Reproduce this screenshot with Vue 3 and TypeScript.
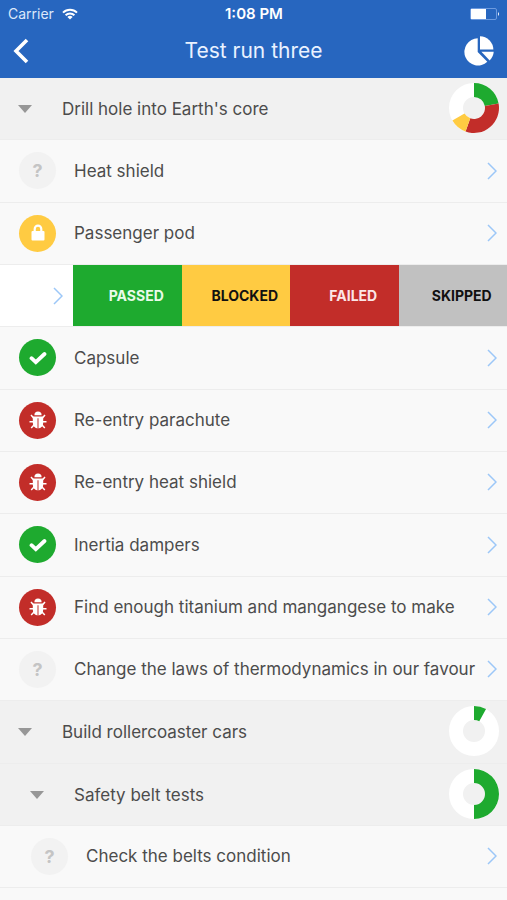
<script setup lang="ts">
type Status = 'none' | 'passed' | 'blocked' | 'failed'

interface Slice {
  color: string
  from: number
  to: number
}

interface Row {
  kind: 'section' | 'test' | 'swipe'
  label: string
  level: number
  status?: Status
  slices?: Slice[]
}

const green = '#1eaa2f'
const red = '#c22d29'
const yellow = '#ffcb42'

const rows: Row[] = [
  {
    kind: 'section',
    label: "Drill hole into Earth's core",
    level: 0,
    slices: [
      { color: green, from: 0, to: 0.222 },
      { color: red, from: 0.222, to: 0.555 },
      { color: yellow, from: 0.555, to: 0.666 },
    ],
  },
  { kind: 'test', label: 'Heat shield', level: 0, status: 'none' },
  { kind: 'test', label: 'Passenger pod', level: 0, status: 'blocked' },
  { kind: 'swipe', label: 'Set result', level: 0 },
  { kind: 'test', label: 'Capsule', level: 0, status: 'passed' },
  { kind: 'test', label: 'Re-entry parachute', level: 0, status: 'failed' },
  { kind: 'test', label: 'Re-entry heat shield', level: 0, status: 'failed' },
  { kind: 'test', label: 'Inertia dampers', level: 0, status: 'passed' },
  { kind: 'test', label: 'Find enough titanium and mangangese to make', level: 0, status: 'failed' },
  { kind: 'test', label: 'Change the laws of thermodynamics in our favour', level: 0, status: 'none' },
  {
    kind: 'section',
    label: 'Build rollercoaster cars',
    level: 0,
    slices: [{ color: green, from: 0, to: 0.08 }],
  },
  {
    kind: 'section',
    label: 'Safety belt tests',
    level: 1,
    slices: [{ color: green, from: 0, to: 0.5 }],
  },
  { kind: 'test', label: 'Check the belts condition', level: 1, status: 'none' },
]

const actions = ['Passed', 'Blocked', 'Failed', 'Skipped']

function point(fraction: number, radius: number): string {
  const angle = fraction * Math.PI * 2
  return `${(25 + radius * Math.sin(angle)).toFixed(2)} ${(25 - radius * Math.cos(angle)).toFixed(2)}`
}

function arc({ from, to }: Slice): string {
  const large = to - from > 0.5 ? 1 : 0
  return `M${point(from, 25)}A25 25 0 ${large} 1 ${point(to, 25)}L${point(to, 11)}A11 11 0 ${large} 0 ${point(from, 11)}Z`
}
</script>

<template>
  <div class="screen">
    <header class="top">
      <div class="status">
        <span class="carrier">
          Carrier
          <svg width="16" height="12" viewBox="0 0 16 12" fill="none" stroke="#fff" stroke-width="2" aria-hidden="true">
            <path d="M1 4.6a10 10 0 0 1 14 0M3.6 7.3a6.3 6.3 0 0 1 8.8 0" />
            <path d="M8 11.6 5.4 9a3.7 3.7 0 0 1 5.2 0z" fill="#fff" stroke="none" />
          </svg>
        </span>
        <time class="clock">1:08 PM</time>
        <svg class="battery" width="30" height="12" viewBox="0 0 30 12" aria-hidden="true">
          <rect x=".5" y=".5" width="26" height="11" rx="1.5" fill="none" stroke="#6d9ade" />
          <path d="M1 1h15v10H1z" fill="#fff" />
          <path d="M28 4q2 2 0 4z" fill="#fff" />
        </svg>
      </div>
      <div class="nav">
        <button class="nav-button" type="button" aria-label="Back">
          <svg width="16" height="26" viewBox="0 0 16 26" fill="none" stroke="#fff" stroke-width="3.6">
            <path d="M14 2 3 13l11 11" />
          </svg>
        </button>
        <h1>Test run three</h1>
        <button class="nav-button chart" type="button" aria-label="Statistics">
          <svg width="30" height="30" viewBox="0 0 30 30" fill="#fff">
            <path d="M13.7 2.3V16l9.6 9.8A13.6 13.6 0 1 1 13.7 2.3z" />
            <path d="M16 0.2A13.8 13.8 0 0 1 29.4 13.6H16z" />
            <path d="M17.4 15.8h12.3a13 13 0 0 1-4 8.6z" />
          </svg>
        </button>
      </div>
    </header>

    <ul class="list">
      <li v-for="row in rows" :key="row.label" :class="['row', row.kind, { nested: row.level > 0 }]">
        <template v-if="row.kind === 'section'">
          <button class="toggle" type="button" :aria-label="row.label" aria-expanded="true">
            <svg width="14" height="8" viewBox="0 0 14 8" fill="#979797"><path d="M0 0h14L7 8z" /></svg>
          </button>
          <h2 class="label">{{ row.label }}</h2>
          <svg class="donut" width="50" height="50" viewBox="0 0 50 50" aria-hidden="true">
            <circle cx="25" cy="25" r="18" fill="none" stroke="#fff" stroke-width="14" />
            <path v-for="slice in row.slices" :key="slice.from" :d="arc(slice)" :fill="slice.color" />
          </svg>
        </template>

        <template v-else-if="row.kind === 'swipe'">
          <a class="peek" href="#" :aria-label="row.label">
            <svg class="chevron" width="10" height="18" viewBox="0 0 10 18"><path d="m1 1 8 8-8 8" /></svg>
          </a>
          <button v-for="action in actions" :key="action" type="button" :class="['action', action.toLowerCase()]">
            {{ action }}
          </button>
        </template>

        <a v-else class="link" href="#">
          <span :class="['badge', row.status]">
            <template v-if="row.status === 'none'">?</template>
            <svg v-else-if="row.status === 'blocked'" width="14" height="19" viewBox="0 0 14 19">
              <path d="M3.7 8V4.9a3.3 3.3 0 0 1 6.6 0V8" fill="none" stroke="#fff" stroke-width="2.2" />
              <rect x=".5" y="7" width="13" height="9.4" rx="1" fill="#fff" />
            </svg>
            <svg v-else-if="row.status === 'passed'" width="18" height="14" viewBox="0 0 18 14">
              <path d="m2.500 7.200 4.300 4L15.500 3" fill="none" stroke="#fff" stroke-width="3.800" stroke-linecap="round" />
            </svg>
            <svg v-else width="18" height="19" viewBox="0 0 18 19">
              <path d="M5.400 4.200a3.600 3.600 0 0 1 7.200 0z" fill="#fff" />
              <path d="M3.800 5.400h10.400v6.200q0 5.200-4.700 5.900V7.200h-1v10.300q-4.700-.7-4.700-5.900z" fill="#fff" />
              <path d="M4.600 7 2 4M13.400 7 16 4M4.500 10.800H.5M13.500 10.800h4M5 14l-2.800 3M13 14l2.800 3" fill="none" stroke="#fff" stroke-width="1.500" />
            </svg>
          </span>
          <span class="label">{{ row.label }}</span>
          <svg class="chevron" width="10" height="18" viewBox="0 0 10 18" aria-hidden="true"><path d="m1 1 8 8-8 8" /></svg>
        </a>
      </li>
    </ul>
  </div>
</template>

<style>
body {
  margin: 0;
  background: #f9f9f9;
}
</style>

<style scoped>
.screen {
  min-height: 100vh;
  overflow: hidden;
  background: #f9f9f9;
  color: #4c4c4c;
  font-family: Inter, "Liberation Sans", sans-serif;
  font-size: 17px;
}

button {
  padding: 0;
  border: 0;
  background: none;
  color: inherit;
  font: inherit;
  cursor: pointer;
}

a {
  color: inherit;
  text-decoration: none;
}

svg {
  display: block;
  flex: none;
}

.top {
  background: #2766bf;
  color: #fff;
}

.status {
  display: grid;
  grid-template-columns: 1fr auto 1fr;
  align-items: center;
  height: 27px;
  padding: 0 7px 0 8px;
  font-size: 14px;
}

.carrier {
  display: flex;
  align-items: center;
  gap: 8px;
  color: #dce8fa;
}

.clock {
  font-size: 15px;
  font-weight: 600;
}

.battery {
  justify-self: end;
}

.nav {
  display: grid;
  grid-template-columns: 44px 1fr 44px;
  align-items: center;
  box-sizing: border-box;
  height: 51px;
  padding-bottom: 3px;
}

.nav-button {
  display: flex;
  align-items: center;
  height: 48px;
  padding-left: 13px;
}

.chart {
  justify-content: flex-end;
  padding: 0 13px 0 0;
}

h1 {
  margin: 0;
  color: #eaf2ff;
  font-size: 21px;
  font-weight: 400;
  line-height: 28px;
  text-align: center;
}

.list {
  margin: 0;
  padding: 0;
  list-style: none;
}

.row {
  display: flex;
  box-sizing: border-box;
  height: 62px;
  border-bottom: 1px solid #ededed;
}

.row:nth-child(3n + 2) {
  height: 63px;
}

.section {
  align-items: center;
  padding: 0 8px 0 18px;
  background: #f1f1f1;
}

.toggle {
  display: flex;
  align-items: center;
  width: 44px;
  height: 44px;
}

.label {
  flex: 1;
  min-width: 0;
  margin: 0;
  font-size: 17px;
  font-weight: 400;
  line-height: 24px;
  white-space: nowrap;
}

.donut {
  margin-bottom: 2px;
}

.section.nested {
  padding-left: 30px;
}

.link {
  display: flex;
  flex: 1;
  align-items: center;
  min-width: 0;
  padding: 0 10px 1px 19px;
}

.nested .link {
  padding-left: 31px;
}

.badge {
  display: flex;
  flex: none;
  align-items: center;
  justify-content: center;
  width: 37px;
  height: 37px;
  margin-right: 18px;
  border-radius: 50%;
  background: #f2f2f2;
  color: #c4c4c4;
  font-size: 18px;
  font-weight: 700;
}

.badge.passed {
  background: #1eaa2f;
}

.badge.blocked {
  background: #ffcb42;
}

.badge.failed {
  background: #c22d29;
}

.chevron {
  fill: none;
  stroke: #9cc7f8;
  stroke-width: 1.5;
}

.peek {
  display: flex;
  flex: none;
  align-items: center;
  justify-content: flex-end;
  box-sizing: border-box;
  width: 73px;
  padding-right: 10px;
  background: #fff;
}

.action {
  flex: 1;
  padding-left: 18px;
  font-size: 14px;
  font-weight: 700;
  text-transform: uppercase;
}

.action.passed {
  background: #1eaa2f;
  color: #e9fbe9;
}

.action.blocked {
  background: #ffcb42;
  color: #111;
}

.action.failed {
  background: #c22d29;
  color: #fbe6e6;
}

.action.skipped {
  background: #c1c1c1;
  color: #111;
}
</style>
